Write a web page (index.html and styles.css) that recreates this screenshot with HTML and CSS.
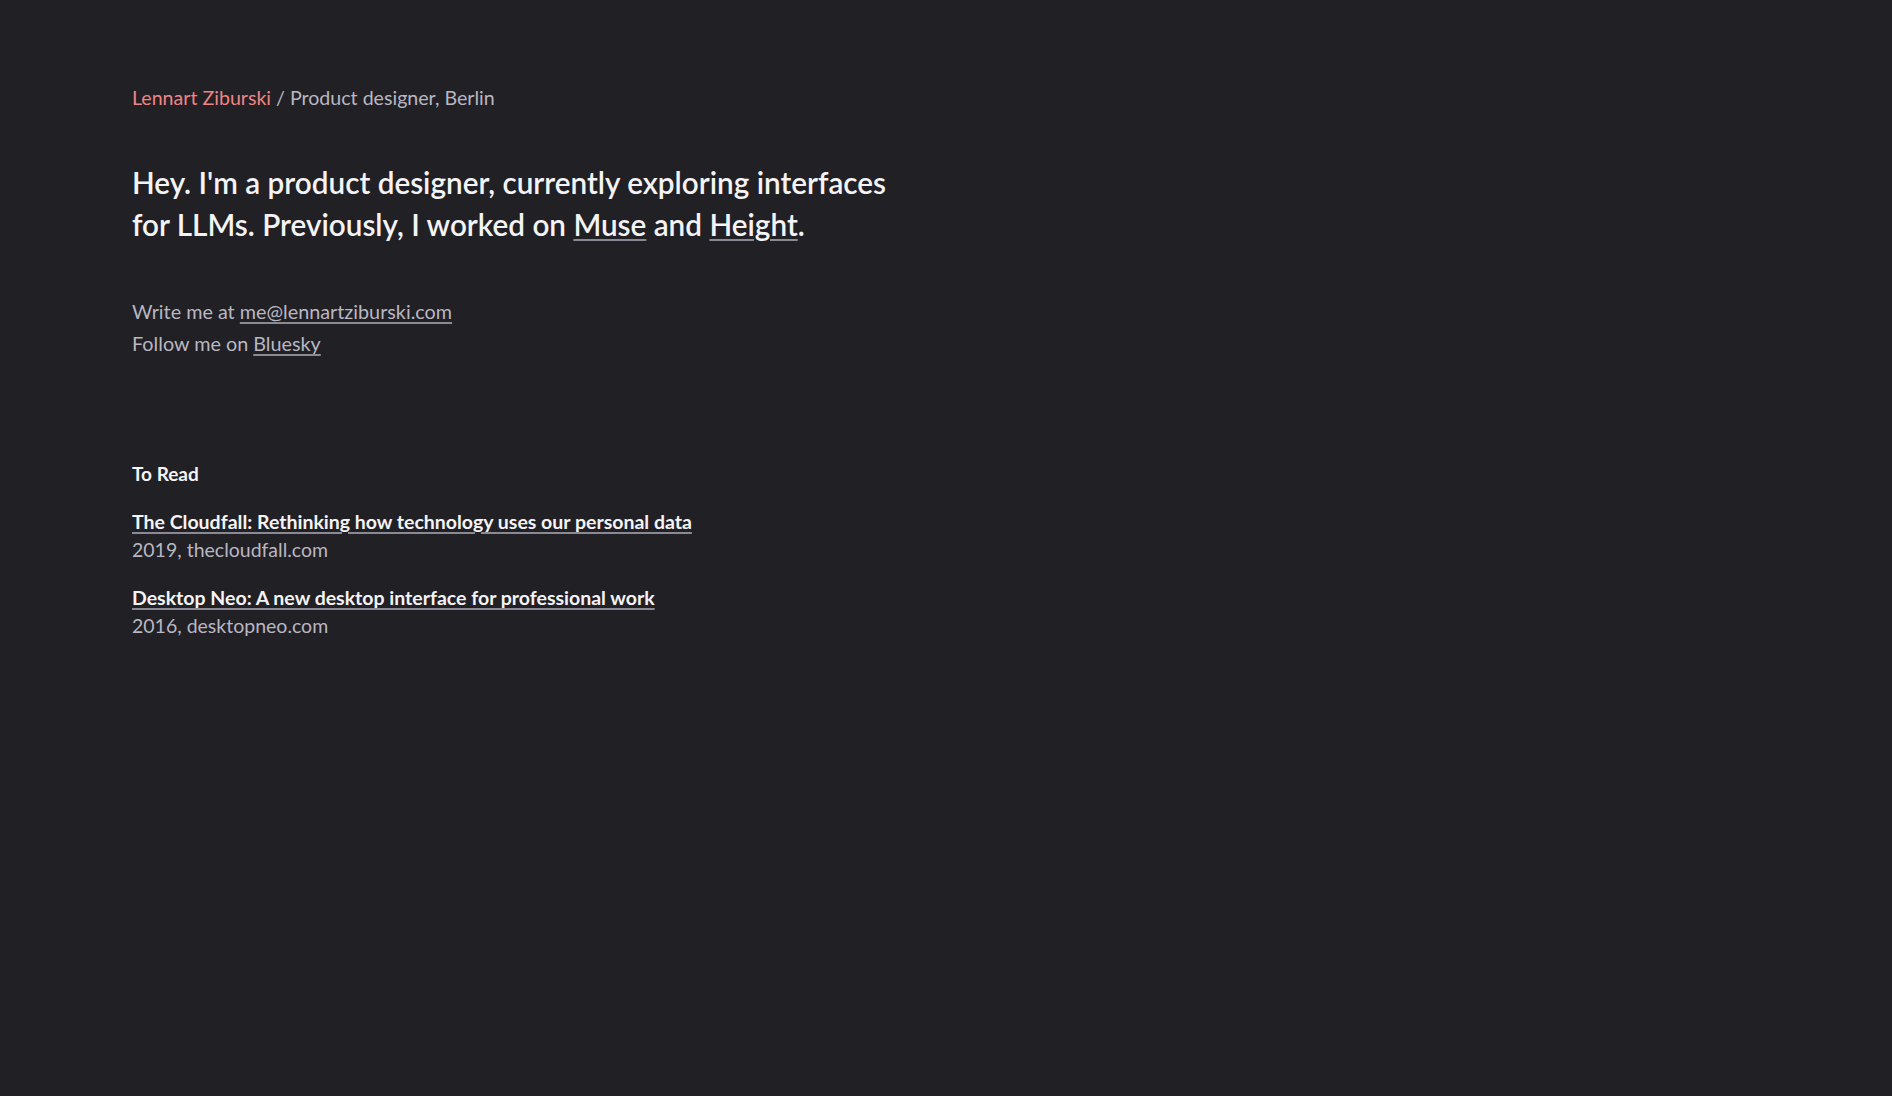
FILE: index.html
```html
<!DOCTYPE html>
<html lang="en">
  <head>
    <meta charset="UTF-8" />
    <meta name="viewport" content="width=device-width, initial-scale=1.0" />
    <title>Lennart Ziburski</title>
    <link rel="stylesheet" href="styles.css">
  </head>
  <body>
    <main class="page">
      <header class="intro-line">
        <span class="name">Lennart Ziburski</span> / Product designer, Berlin
      </header>

      <h1 class="headline">
        Hey. I'm a product designer, currently exploring interfaces<br />
        for LLMs. Previously, I worked on <a href="#">Muse</a> and
        <a href="#">Height</a>.
      </h1>

      <div class="contact">
        <p>Write me at <a href="#">me@lennartziburski.com</a></p>
        <p>Follow me on <a href="#">Bluesky</a></p>
      </div>

      <section class="reading">
        <h2>To Read</h2>
        <ul class="reading-list">
          <li>
            <a href="#">The Cloudfall: Rethinking how technology uses our personal data</a>
            <span class="meta">2019, thecloudfall.com</span>
          </li>
          <li>
            <a href="#">Desktop Neo: A new desktop interface for professional work</a>
            <span class="meta">2016, desktopneo.com</span>
          </li>
        </ul>
      </section>
    </main>
  </body>
</html>
```

FILE: styles.css
```css
* {
  margin: 0;
  padding: 0;
  box-sizing: border-box;
}

body {
  background: #212025;
  color: #b9b7c1;
  font-family: "Lato", "Noto Sans", sans-serif;
  font-size: 19.6px;
  height: 100vh;
}

a {
  color: inherit;
  text-decoration: underline;
  text-decoration-color: #8b8993;
  text-decoration-thickness: 2px;
  text-underline-offset: 3px;
}

.page {
  padding: 84px 132px;
}

.intro-line {
  line-height: 28px;
}

.name {
  color: #f08482;
}

.headline {
  margin-top: 50px;
  font-size: 29.7px;
  font-weight: 600;
  line-height: 42px;
  color: #f4f3f6;
}

.contact {
  margin-top: 49px;
  font-size: 19.8px;
  line-height: 32px;
}

.reading {
  margin-top: 101px;
}

.reading h2 {
  font-size: 19px;
  font-weight: 700;
  color: #f4f3f6;
  line-height: 28px;
}

.reading-list {
  list-style: none;
  margin-top: 20px;
  display: flex;
  flex-direction: column;
  gap: 20px;
}

.reading-list li {
  display: flex;
  flex-direction: column;
  align-items: flex-start;
  line-height: 28px;
}

.reading-list a {
  color: #f4f3f6;
  font-weight: 700;
  font-size: 19.5px;
}

.meta {
  font-size: 19.5px;
}
```
